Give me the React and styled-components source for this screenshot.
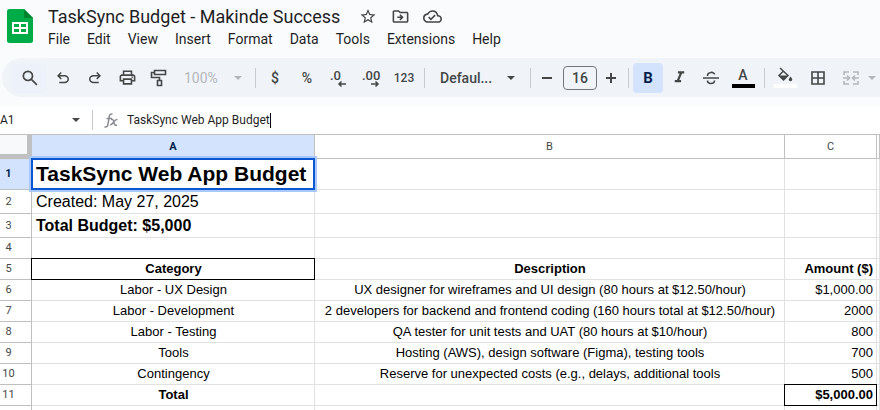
import React from "react";
import styled, { createGlobalStyle, css } from "styled-components";
import {
  MdStarBorder,
  MdOutlineDriveFileMove,
  MdOutlineCloudDone,
  MdOutlinePrint,
  MdFormatItalic,
} from "react-icons/md";

const Global = createGlobalStyle`
  *, *::before, *::after { box-sizing: border-box; }
  body {
    margin: 0;
    overflow: hidden;
    background: #fff;
    font-family: Roboto, "Liberation Sans", sans-serif;
    color: #1f1f1f;
  }
  button, input, select {
    font: inherit;
    color: inherit;
    border: 0;
    padding: 0;
    margin: 0;
    background: none;
    outline: none;
  }
`;

const Page = styled.div`
  display: flex;
  flex-direction: column;
`;

const TopArea = styled.div`
  background: #f9fbfd;
  padding: 5px 0 9px;
`;

const Header = styled.header`
  display: flex;
  padding-left: 7px;
  height: 53px;
`;

const Logo = styled.svg`
  width: 26px;
  height: 34px;
  margin-top: 4px;
  flex: none;
`;

const HeaderText = styled.div`
  margin-left: 8px;
`;

const TitleRow = styled.div`
  display: flex;
  align-items: center;
  height: 23px;
  padding-left: 7px;
`;

const Title = styled.h1`
  margin: 0 19px 0 0;
  font: 400 18px/23px Roboto, sans-serif;
  white-space: nowrap;
`;

const TitleButton = styled.button`
  display: flex;
  align-items: center;
  justify-content: center;
  width: 32px;
  height: 23px;
  color: #444746;
  font-size: 19px;
  &:first-of-type { width: 18px; margin-right: 7px; }
`;

const MenuBar = styled.nav`
  display: flex;
`;

const MenuItem = styled.button`
  height: 23px;
  padding: 0 7px;
  margin-right: 3px;
  font-size: 14px;
  line-height: 23px;
`;

const Toolbar = styled.div`
  display: flex;
  align-items: center;
  height: 39px;
  margin-left: 2px;
  padding-left: 10px;
  border-radius: 20px 0 0 20px;
  background: #f0f4f9;
  color: #444746;
  overflow: hidden;
`;

const ToolButton = styled.button`
  display: flex;
  flex: none;
  align-items: center;
  justify-content: center;
  width: ${(p) => p.$w || 32}px;
  height: 30px;
  border-radius: 4px;
  font-size: ${(p) => p.$size || 14}px;
  font-weight: ${(p) => p.$weight || 500};
  color: ${(p) => (p.$faded ? "#b4b7ba" : "inherit")};
  ${(p) => p.$tint && css`background: #edf2fa;`}
  ${(p) => p.$active && css`background: #d3e3fd; color: #041e49;`}
`;

const Separator = styled.span`
  flex: none;
  width: 1px;
  height: 20px;
  margin: 0 ${(p) => p.$gap ?? 4}px;
  background: #c7c9cc;
`;

const SelectBox = styled.label`
  display: flex;
  flex: none;
  align-items: center;
  gap: 12px;
  padding-left: ${(p) => p.$inset}px;
  width: ${(p) => p.$w}px;
  color: ${(p) => (p.$faded ? "#b4b7ba" : "inherit")};
  select {
    appearance: none;
    width: ${(p) => p.$field}px;
    font-size: 14px;
    font-weight: ${(p) => (p.$faded ? 400 : 500)};
    opacity: 1;
  }
`;

const SizeInput = styled.input`
  flex: none;
  width: 34px;
  height: 24px;
  border: 1px solid #747775;
  border-radius: 4px;
  text-align: center;
  font-size: 14px;
  font-weight: 500;
`;

const FormulaBar = styled.div`
  display: flex;
  align-items: center;
  height: 28px;
`;

const NameInput = styled.input`
  width: 71px;
  font-size: 12px;
`;

const BarButton = styled.button`
  display: flex;
  justify-content: center;
  width: 10px;
  color: #444746;
`;

const FormulaInput = styled.input`
  field-sizing: content;
  font-size: 12px;
`;

const Caret = styled.span`
  width: 1px;
  height: 15px;
  background: #000;
`;

const FxIcon = styled.svg`
  flex: none;
  margin-right: 9px;
`;

const Sheet = styled.table`
  width: 100%;
  table-layout: fixed;
  border-collapse: separate;
  border-spacing: 0;
  border-top: 1px solid #c0c0c0;
  font-family: "Liberation Sans", Arial, sans-serif;
  color: #000;
`;

const Col = styled.col`
  width: ${(p) => (p.$w ? `${p.$w}px` : "auto")};
`;

const Row = styled.tr`
  height: ${(p) => p.$h || 21}px;
`;

const Corner = styled.td`
  padding: 0;
  background: #f8f9fa;
  border-right: 5px solid #c0c0c0;
  border-bottom: 5px solid #c0c0c0;
`;

const Head = styled.th`
  padding: 0;
  border-right: 1px solid #c0c0c0;
  border-bottom: 1px solid #c0c0c0;
  background: ${(p) => (p.$on ? "#d3e3fd" : "#fff")};
  font-family: Roboto, sans-serif;
  font-size: 11px;
  font-weight: ${(p) => (p.$on ? 700 : 400)};
  line-height: 12px;
  color: ${(p) => (p.$on ? "#041e49" : "#444746")};
`;

const RowHead = styled(Head)`
  padding-right: 14px;
`;

const Cell = styled.td`
  position: relative;
  z-index: ${(p) => (p.$boxed || p.$selected ? 1 : "auto")};
  padding: 0 3px 0 4px;
  border-right: 1px solid #e1e1e1;
  border-bottom: 1px solid #e1e1e1;
  font-size: ${(p) => p.$size || 13}px;
  font-weight: ${(p) => (p.$bold ? 700 : 400)};
  line-height: 18px;
  text-align: ${(p) => p.$align || "left"};
  white-space: nowrap;
  ${(p) => (p.$boxed || p.$selected) && css`
    &::after {
      content: "";
      position: absolute;
      inset: -1px;
      pointer-events: none;
      border: ${p.$selected ? "2px solid #0b57d0" : "1px solid #000"};
      box-shadow: ${p.$selected ? "0 0 0 2px #a8c7fa" : "none"};
    }
  `}
`;

const symbols = {
  search:
    "M784-120 532-372q-30 24-69 38t-83 14q-109 0-184.5-75.5T120-580q0-109 75.5-184.5T380-840q109 0 184.5 75.5T640-580q0 44-14 83t-38 69l252 252-56 56ZM380-400q75 0 127.5-52.5T560-580q0-75-52.5-127.5T380-760q-75 0-127.5 52.5T200-580q0 75 52.5 127.5T380-400Z",
  undo:
    "M280-200v-80h284q63 0 109.5-40T720-420q0-60-46.5-100T564-560H312l104 104-56 56-200-200 200-200 56 56-104 104h252q97 0 166.5 63T800-420q0 94-69.5 157T564-200H280Z",
  redo:
    "M396-200q-97 0-166.5-63T160-420q0-94 69.5-157T396-640h252L544-744l56-56 200 200-200 200-56-56 104-104H396q-63 0-109.5 40T240-420q0 60 46.5 100T396-280h284v80H396Z",
};

const Symbol = ({ name, size = 18 }) => (
  <svg width={size} height={size} viewBox="0 -960 960 960" fill="currentColor" aria-hidden="true">
    <path d={symbols[name]} />
  </svg>
);

const Line = ({ children, w = 18, h = 18, sw = 1.6 }) => (
  <svg width={w} height={h} viewBox={`0 0 ${w} ${h}`} fill="none" stroke="currentColor" strokeWidth={sw} aria-hidden="true">
    {children}
  </svg>
);

const Down = () => (
  <svg width="8" height="4" viewBox="0 0 8 4" fill="currentColor" aria-hidden="true">
    <path d="M0 0h8L4 4z" />
  </svg>
);

const DecimalIcon = ({ text, right }) => (
  <svg width="20" height="20" viewBox="0 0 20 20" aria-hidden="true">
    <text x="1" y="12" fontFamily="Roboto, sans-serif" fontSize="13" fontWeight="500" fill="currentColor">
      {text}
    </text>
    <path
      d={right ? "M10 16h7M14.5 13.5 17 16l-2.5 2.5" : "M17 16h-7M12.5 13.5 10 16l2.5 2.5"}
      fill="none"
      stroke="currentColor"
      strokeWidth="1.5"
    />
  </svg>
);

const menus = ["File", "Edit", "View", "Insert", "Format", "Data", "Tools", "Extensions", "Help"];

const budget = [
  ["Labor - UX Design", "UX designer for wireframes and UI design (80 hours at $12.50/hour)", "$1,000.00"],
  ["Labor - Development", "2 developers for backend and frontend coding (160 hours total at $12.50/hour)", "2000"],
  ["Labor - Testing", "QA tester for unit tests and UAT (80 hours at $10/hour)", "800"],
  ["Tools", "Hosting (AWS), design software (Figma), testing tools", "700"],
  ["Contingency", "Reserve for unexpected costs (e.g., delays, additional tools", "500"],
];

const Empty = ({ n }) => Array.from({ length: n }, (_, i) => <Cell key={i} />);

export default function App() {
  return (
    <Page>
      <Global />
      <TopArea>
        <Header>
          <Logo viewBox="0 0 26 34" role="img" aria-label="Sheets">
            <path d="M2.5 0H17l9 9v22.500a2.5 2.5 0 0 1-2.5 2.5h-21A2.5 2.5 0 0 1 0 31.5v-29A2.5 2.5 0 0 1 2.5 0z" fill="#00ac47" />
            <path d="M17 0l9 9h-9z" fill="#00832d" />
            <path fillRule="evenodd" fill="#fff" d="M5 13h16v12H5zM7 15v3h5v-3zM14 15v3h5v-3zM7 20v3h5v-3zM14 20v3h5v-3z" />
          </Logo>
          <HeaderText>
            <TitleRow>
              <Title>TaskSync Budget - Makinde Success</Title>
              <TitleButton aria-label="Star"><MdStarBorder /></TitleButton>
              <TitleButton aria-label="Move"><MdOutlineDriveFileMove /></TitleButton>
              <TitleButton aria-label="Document status"><MdOutlineCloudDone /></TitleButton>
            </TitleRow>
            <MenuBar>
              {menus.map((m) => <MenuItem key={m}>{m}</MenuItem>)}
            </MenuBar>
          </HeaderText>
        </Header>
        <Toolbar role="toolbar">
          <ToolButton $w={35} $tint aria-label="Search the menus"><Symbol name="search" size={20} /></ToolButton>
          <ToolButton aria-label="Undo"><Symbol name="undo" /></ToolButton>
          <ToolButton aria-label="Redo"><Symbol name="redo" /></ToolButton>
          <ToolButton $size={19} aria-label="Print"><MdOutlinePrint /></ToolButton>
          <ToolButton aria-label="Paint format">
            <Line>
              <path d="M4.5 1.5h11v4h-11zM4.5 3.5h-3v5h8v3M7.5 11.5h4v5h-4z" />
            </Line>
          </ToolButton>
          <SelectBox $w={80} $field={38} $inset={9} $faded>
            <select aria-label="Zoom" defaultValue="100%"><option>100%</option></select>
            <Down />
          </SelectBox>
          <Separator $gap={0} />
          <ToolButton $w={38} aria-label="Currency">$</ToolButton>
          <ToolButton $w={26} aria-label="Percent">%</ToolButton>
          <ToolButton $w={38} aria-label="Decrease decimal places"><DecimalIcon text=".0" /></ToolButton>
          <ToolButton $w={26} aria-label="Increase decimal places"><DecimalIcon text=".00" right /></ToolButton>
          <ToolButton $w={40} $size={12} aria-label="More formats">123</ToolButton>
          <Separator $gap={0} />
          <SelectBox $w={105} $field={55} $inset={15}>
            <select aria-label="Font" defaultValue="Defaul..."><option>Defaul...</option></select>
            <Down />
          </SelectBox>
          <Separator $gap={0} />
          <ToolButton aria-label="Decrease font size">
            <Line w={12} h={12} sw={2}><path d="M1 6h10" /></Line>
          </ToolButton>
          <SizeInput aria-label="Font size" defaultValue="16" />
          <ToolButton $w={27} aria-label="Increase font size">
            <Line w={12} h={12} sw={2}><path d="M1 6h10M6 1v10" /></Line>
          </ToolButton>
          <Separator />
          <ToolButton $w={30} $weight={700} $active $size={15} aria-label="Bold">B</ToolButton>
          <ToolButton $size={19} aria-label="Italic"><MdFormatItalic /></ToolButton>
          <ToolButton aria-label="Strikethrough">
            <Line w={16} h={16}>
              <path d="M0 8h16M4.5 6c0-4.500 7-4.500 7-1.500M4.5 10.500c0 4 7 4 7 0" />
            </Line>
          </ToolButton>
          <ToolButton $w={33} aria-label="Text color">
            <svg width="23" height="22" viewBox="0 0 23 22" aria-hidden="true">
              <text x="11" y="13" textAnchor="middle" fontFamily="Roboto, sans-serif" fontSize="14" fontWeight="500" fill="currentColor">A</text>
              <path d="M0 17h23v4H0z" fill="#000" />
            </svg>
          </ToolButton>
          <Separator />
          <ToolButton $w={32} aria-label="Fill color">
            <svg width="23" height="22" viewBox="0 0 23 22" aria-hidden="true">
              <path d="M6 1l8 7.5-4.5 4.500L5 8.500 9.500 4" fill="none" stroke="currentColor" strokeWidth="1.5" />
              <path d="M5 8.500h9L9.500 13zM16.5 9.500c1 1.300 1.800 2.200 1.800 3a1.800 1.800 0 0 1-3.600 0c0-.8.800-1.700 1.800-3z" fill="currentColor" />
              <path d="M0 17h23v4H0z" fill="#fff" />
            </svg>
          </ToolButton>
          <ToolButton $w={34} aria-label="Borders">
            <Line w={14} h={14}><path d="M1 1h12v12H1zM7 1v12M1 7h12" /></Line>
          </ToolButton>
          <ToolButton $faded aria-label="Merge cells">
            <Line w={16} h={14}>
              <path d="M6 1H1v3M1 10v3h5M10 1h5v3M15 10v3h-5M0 7h6M4 4.500 6.500 7 4 9.500M16 7h-6M12 4.500 9.500 7l2.500 2.500" />
            </Line>
          </ToolButton>
          <ToolButton $w={10} $faded aria-label="Merge type"><Down /></ToolButton>
        </Toolbar>
      </TopArea>

      <FormulaBar>
        <NameInput aria-label="Name box" defaultValue="A1" />
        <BarButton aria-label="Named ranges"><Down /></BarButton>
        <Separator $gap={11} />
        <FxIcon width="14" height="15" viewBox="0 0 14 15" fill="none" stroke="#8a8d90" strokeWidth="1.5" aria-hidden="true">
          <path d="M8.500 1.200C6.500.5 5.700 1.500 5.400 3L3.800 12c-.3 1.600-1.300 2.300-3.300 1.700M2.500 5.500h5.500M7 6.500c2-.5 2 0 2.800 2.500s1 4 3.200 3M13.500 6.500c-2-.5-3 1.500-4 2.800s-2 3-3.500 2.500" />
        </FxIcon>
        <FormulaInput aria-label="Formula" defaultValue="TaskSync Web App Budget" />
        <Caret />
      </FormulaBar>

      <Sheet>
        <colgroup>
          <Col $w={32} /><Col $w={283} /><Col /><Col $w={92} /><Col $w={3} />
        </colgroup>
        <thead>
          <Row $h={24}>
            <Corner />
            <Head scope="col" $on>A</Head>
            <Head scope="col">B</Head>
            <Head scope="col">C</Head>
            <Head scope="col" />
          </Row>
        </thead>
        <tbody>
          <Row $h={31}>
            <RowHead scope="row" $on>1</RowHead>
            <Cell $size={21} $bold $selected>TaskSync Web App Budget</Cell>
            <Empty n={3} />
          </Row>
          <Row $h={24}>
            <RowHead scope="row">2</RowHead>
            <Cell $size={16}>Created: May 27, 2025</Cell>
            <Empty n={3} />
          </Row>
          <Row $h={24}>
            <RowHead scope="row">3</RowHead>
            <Cell $size={16} $bold>Total Budget: $5,000</Cell>
            <Empty n={3} />
          </Row>
          <Row>
            <RowHead scope="row">4</RowHead>
            <Empty n={4} />
          </Row>
          <Row>
            <RowHead scope="row">5</RowHead>
            <Cell $bold $align="center" $boxed>Category</Cell>
            <Cell $bold $align="center">Description</Cell>
            <Cell $bold $align="right">Amount ($)</Cell>
            <Cell />
          </Row>
          {budget.map(([category, description, amount], i) => (
            <Row key={category}>
              <RowHead scope="row">{i + 6}</RowHead>
              <Cell $align="center">{category}</Cell>
              <Cell $align="center">{description}</Cell>
              <Cell $align="right">{amount}</Cell>
              <Cell />
            </Row>
          ))}
          <Row>
            <RowHead scope="row">11</RowHead>
            <Cell $bold $align="center">Total</Cell>
            <Cell />
            <Cell $bold $align="right" $boxed>$5,000.00</Cell>
            <Cell />
          </Row>
          <Row>
            <RowHead scope="row" />
            <Empty n={4} />
          </Row>
        </tbody>
      </Sheet>
    </Page>
  );
}
